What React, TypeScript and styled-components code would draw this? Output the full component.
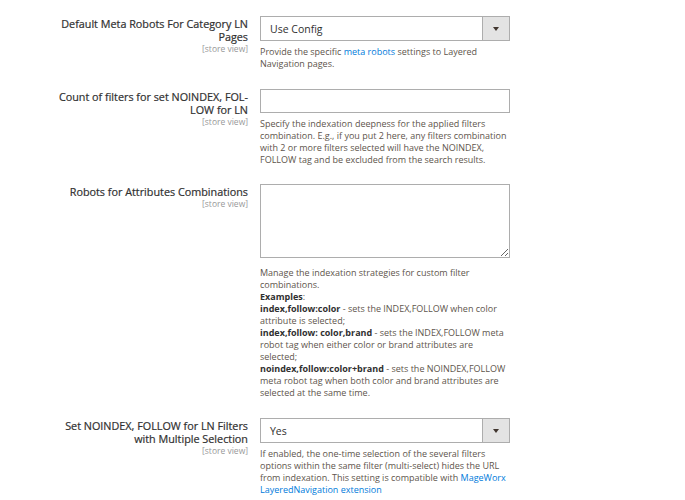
import React from "react";
import styled, { createGlobalStyle } from "styled-components";

const GlobalStyle = createGlobalStyle`
    body {
        margin: 0;
        background: #ffffff;
        font-family: "Open Sans", "Liberation Sans", sans-serif;
        color: #303030;
    }
`

const Page = styled.div`
    padding-top: 16px;
    display: flex;
    flex-direction: column;
`

const Row = styled.div<{ $gap: number }>`
    display: grid;
    grid-template-columns: 248px 250px;
    column-gap: 12px;
    margin-bottom: ${p => p.$gap}px;
`

const Label = styled.div`
    padding-left: 56px;
    padding-top: 1px;
    text-align: right;
    font-size: 10.8px;
    font-weight: 400;
    -webkit-text-stroke: 0.2px #303030;
    line-height: 13px;
    color: #303030;
`

const Scope = styled.div`
    font-size: 8.5px;
    font-weight: 400;
    -webkit-text-stroke: 0;
    line-height: 11px;
    color: #999999;
`

const Field = styled.div`
    display: flex;
    flex-direction: column;
`

const SelectBox = styled.div`
    height: 25px;
    box-sizing: border-box;
    border: 1px solid #adadad;
    display: flex;
    align-items: center;
    background: #fff;
`

const SelectValue = styled.span`
    flex: 1;
    padding-left: 9px;
    font-size: 10.5px;
    color: #303030;
`

const SelectButton = styled.span`
    width: 26px;
    align-self: stretch;
    border-left: 1px solid #adadad;
    background: #e3e3e3;
    display: flex;
    align-items: center;
    justify-content: center;
`

const Arrow = styled.span`
    width: 0;
    height: 0;
    border-left: 3px solid transparent;
    border-right: 3px solid transparent;
    border-top: 4px solid #41362f;
`

const TextInput = styled.input`
    height: 24px;
    box-sizing: border-box;
    border: 1px solid #adadad;
    margin: 0;
    outline: none;
`

const TextArea = styled.textarea`
    height: 74px;
    box-sizing: border-box;
    border: 1px solid #adadad;
    margin: 0 0 4px;
    resize: vertical;
    outline: none;
`

const Note = styled.div`
    margin-top: 5px;
    font-size: 9px;
    line-height: 12px;
    color: #5e554c;

    b {
        font-weight: 700;
        color: #303030;
    }
`

const Link = styled.a`
    color: #007bdb;
    text-decoration: none;
`

const Select = ({ value }: { value: string }) => (
    <SelectBox>
        <SelectValue>{value}</SelectValue>
        <SelectButton><Arrow /></SelectButton>
    </SelectBox>
)

export default function App() {
    return (
        <Page lang="en">
            <GlobalStyle />
            <Row $gap={19}>
                <Label>
                    Default Meta Robots For Category LN Pages
                    <Scope>[store view]</Scope>
                </Label>
                <Field>
                    <Select value="Use Config" />
                    <Note>
                        Provide the specific <Link href="#">meta robots</Link> settings to Layered Navigation pages.
                    </Note>
                </Field>
            </Row>
            <Row $gap={18}>
                <Label>
                    Count of filters for set NOINDEX, FOL{"\u00AD"}LOW for LN
                    <Scope>[store view]</Scope>
                </Label>
                <Field>
                    <TextInput type="text" />
                    <Note>
                        Specify the indexation deepness for the applied filters combination. E.g., if you put 2 here, any filters combination with 2 or more filters selected will have the NOINDEX, FOLLOW tag and be excluded from the search results.
                    </Note>
                </Field>
            </Row>
            <Row $gap={19}>
                <Label>
                    Robots for Attributes Combinations
                    <Scope>[store view]</Scope>
                </Label>
                <Field>
                    <TextArea />
                    <Note>
                        Manage the indexation strategies for custom filter combinations.<br />
                        <b>Examples</b>:<br />
                        <b>index,follow:color</b> - sets the INDEX,FOLLOW when color attribute is selected;<br />
                        <b>index,follow: color,brand</b> - sets the INDEX,FOLLOW meta robot tag when either color or brand attributes are selected;<br />
                        <b>noindex,follow:color+brand</b> - sets the NOINDEX,FOLLOW meta robot tag when both color and brand attributes are selected at the same time.
                    </Note>
                </Field>
            </Row>
            <Row $gap={20}>
                <Label>
                    Set NOINDEX, FOLLOW for LN Filters with Multiple Selection
                    <Scope>[store view]</Scope>
                </Label>
                <Field>
                    <Select value="Yes" />
                    <Note>
                        If enabled, the one-time selection of the several filters options within the same filter (multi-select) hides the URL from indexation. This setting is compatible with <Link href="#">MageWorx LayeredNavigation extension</Link>
                    </Note>
                </Field>
            </Row>
        </Page>
    )
}
